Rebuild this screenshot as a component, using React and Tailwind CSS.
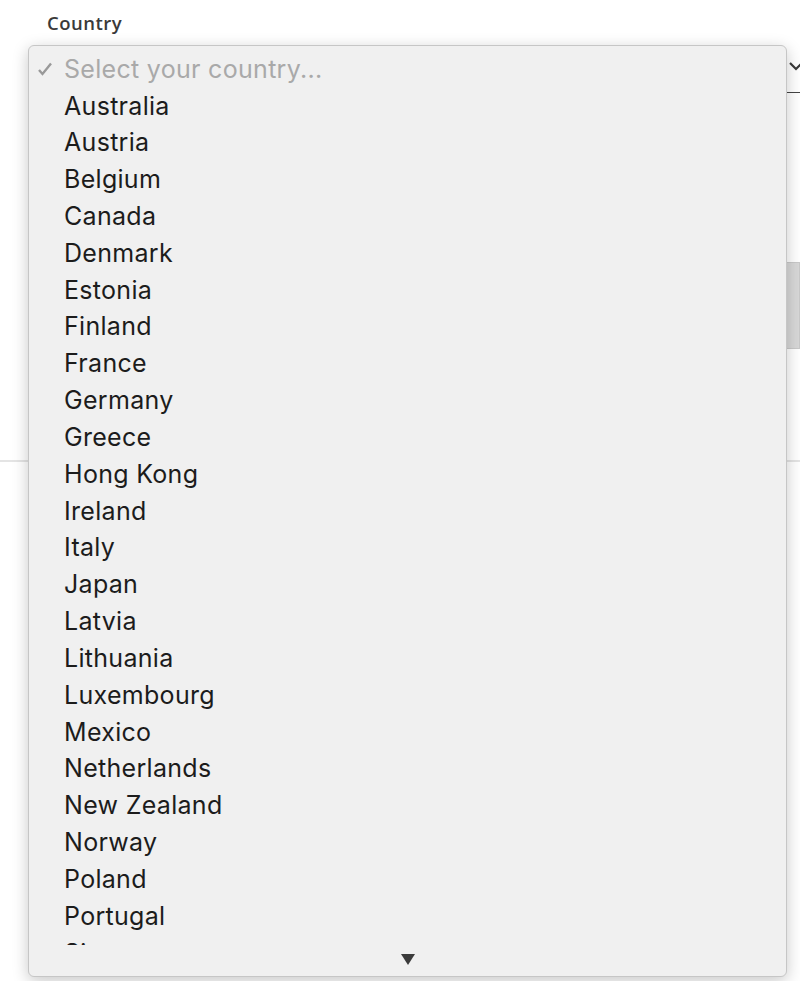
const COUNTRIES = [
  'Australia',
  'Austria',
  'Belgium',
  'Canada',
  'Denmark',
  'Estonia',
  'Finland',
  'France',
  'Germany',
  'Greece',
  'Hong Kong',
  'Ireland',
  'Italy',
  'Japan',
  'Latvia',
  'Lithuania',
  'Luxembourg',
  'Mexico',
  'Netherlands',
  'New Zealand',
  'Norway',
  'Poland',
  'Portugal',
  'Singapore',
]

function Backdrop() {
  return (
    <div className="relative h-[981px] w-[800px] overflow-hidden bg-white">
      <p className="pl-[47px] pt-[10px] text-[18.5px] font-semibold leading-[26px] tracking-[0.5px] text-[#3a3a3a] [font-family:'Open_Sans',sans-serif]">
        Country
      </p>
      {/* the closed select underneath, only its right end peeks out */}
      <div className="ml-[47px] mt-[22px] flex h-[35px] items-start justify-end border-b border-[#444]">
        <svg width="20" height="14" viewBox="0 0 20 14" className="-mr-[8px] mt-[2px]">
          <path d="M2 3 L8 9 L14 3" fill="none" stroke="#3a3a3a" strokeWidth="2.2" />
        </svg>
      </div>
      <div className="mt-[169px] flex justify-end">
        <div className="h-[87px] w-[40px] border border-[#c9c9c9] bg-[#d8d8d8]" />
      </div>
      <div className="mt-[111px] h-[2px] bg-[#e4e4e4]" />
    </div>
  )
}

function DropdownMenu() {
  return (
    <div className="absolute left-[28px] top-[45px] flex h-[932px] w-[759px] flex-col overflow-hidden rounded-[6px] border border-[#c6c6c6] bg-[#f0f0f0] shadow-[0_4px_16px_rgba(0,0,0,0.22)] [font-family:Inter,'Noto_Sans',sans-serif]">
      <div className="h-[899px] overflow-hidden pt-[5px]">
        <div className="flex h-[36.83px] items-center text-[25px] tracking-[0.3px] text-[#a9a9a9]">
          <svg width="35" height="18" viewBox="0 0 35 18" className="shrink-0">
            <path d="M10 10 L13.5 14 L22 3.5" fill="none" stroke="#999" strokeWidth="2.4" />
          </svg>
          <span>Select your country...</span>
        </div>
        {COUNTRIES.map((c) => (
          <div
            key={c}
            className="flex h-[36.83px] items-center pl-[35px] text-[25px] tracking-[0.3px] text-[#1c1c1c]"
          >
            {c}
          </div>
        ))}
      </div>
      <div className="flex flex-1 items-center justify-center">
        <svg width="16" height="13" viewBox="0 0 16 13" className="-mt-[3px]">
          <path d="M1 1 H15 L8 12 Z" fill="#3b3b3b" />
        </svg>
      </div>
    </div>
  )
}

export default function App() {
  return (
    <div className="relative h-[981px] w-[800px]">
      <Backdrop />
      <DropdownMenu />
    </div>
  )
}
